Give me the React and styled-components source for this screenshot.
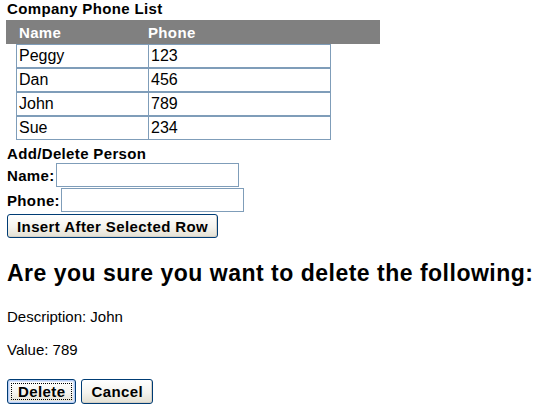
import React from "react";
import styled, { createGlobalStyle } from "styled-components";

const Global = createGlobalStyle`
  html, body { margin: 0; padding: 0; background: #fff; }
  body { font-family: "Liberation Sans", Arial, sans-serif; color: #000; }
`;

const Page = styled.div`
  display: flex;
  flex-direction: column;
  align-items: flex-start;
  padding: 0 0 0 7px;
`;

const Title = styled.div`
  font-size: 15px;
  font-weight: bold;
  letter-spacing: 0.35px;
  line-height: 17px;
  height: 20px;
  box-sizing: border-box;
`;

const HeaderBar = styled.div`
  display: grid;
  grid-template-columns: 129px 1fr;
  width: 374px;
  height: 24px;
  margin-left: -1px;
  background: #808080;
  color: #fff;
  font-size: 15px;
  font-weight: bold;
  letter-spacing: 0.35px;
  align-items: center;
  padding-left: 13px;
  box-sizing: border-box;
`;

const Rows = styled.div`
  display: flex;
  flex-direction: column;
  margin-left: 9px;
`;

const Row = styled.div`
  display: flex;
`;

const Cell = styled.div`
  width: ${(p) => p.$w}px;
  height: 24px;
  margin-left: ${(p) => (p.$joined ? -1 : 0)}px;
  box-sizing: border-box;
  border: 1px solid #7f9db9;
  padding: 0 2px;
  font-size: 16px;
  line-height: 22px;
  background: #fff;
`;

const SubTitle = styled.div`
  font-size: 15px;
  font-weight: bold;
  letter-spacing: 0.35px;
  line-height: 17px;
  margin-top: 5px;
`;

const FieldRow = styled.div`
  display: flex;
  align-items: center;
  margin-top: ${(p) => p.$mt}px;
`;

const Label = styled.span`
  font-size: 15px;
  font-weight: bold;
  letter-spacing: 0.35px;
`;

const TextBox = styled.input`
  width: 183px;
  height: 24px;
  box-sizing: border-box;
  border: 1px solid #7f9db9;
  margin: 0 0 0 1px;
  padding: 0 2px;
  font-family: inherit;
  font-size: 15px;
  outline: none;
`;

const Button = styled.button`
  font-family: "Liberation Sans", Arial, sans-serif;
  font-size: 15px;
  font-weight: bold;
  letter-spacing: 0.4px;
  color: #000;
  height: ${(p) => p.$h || 24}px;
  margin-top: ${(p) => p.$mt || 0}px;
  padding: 0 ${(p) => p.$px || 8}px;
  border: 1px solid #003c74;
  border-radius: 3px;
  background: linear-gradient(#ffffff 0%, #f4f3ee 55%, #e3e0d3 100%);
  box-shadow: inset -1px -1px 0 #d6d0c5;
  position: relative;
  cursor: pointer;
  ${(p) =>
    p.$focused &&
    `
    box-shadow: inset 0 0 0 1px #b6ccf4, inset 0 0 0 2px #d9e4f8;
    &::after {
      content: "";
      position: absolute;
      inset: 3px;
      border: 1px dotted #000;
    }
  `}
`;

const Heading = styled.h2`
  font-size: 23px;
  font-weight: bold;
  letter-spacing: 0.5px;
  margin: 22px 0 0 0;
  line-height: 26px;
`;

const Para = styled.p`
  font-size: 15px;
  margin: ${(p) => p.$mt}px 0 0 0;
  line-height: 17px;
`;

const Buttons = styled.div`
  display: flex;
  gap: 5px;
  margin-top: 21px;
`;

const people = [
  ["Peggy", "123"],
  ["Dan", "456"],
  ["John", "789"],
  ["Sue", "234"],
];

export default function App() {
  return (
    <>
      <Global />
      <Page>
        <Title>Company Phone List</Title>
        <HeaderBar>
          <span>Name</span>
          <span>Phone</span>
        </HeaderBar>
        <Rows>
          {people.map(([n, p]) => (
            <Row key={n}>
              <Cell $w={133}>{n}</Cell>
              <Cell $w={183} $joined>{p}</Cell>
            </Row>
          ))}
        </Rows>
        <SubTitle>Add/Delete Person</SubTitle>
        <FieldRow $mt={1}>
          <Label>Name:</Label>
          <TextBox />
        </FieldRow>
        <FieldRow $mt={1}>
          <Label>Phone:</Label>
          <TextBox />
        </FieldRow>
        <Button $mt={2} $px={9}>Insert After Selected Row</Button>
        <Heading>Are you sure you want to delete the following:</Heading>
        <Para $mt={22}>Description: John</Para>
        <Para $mt={16}>Value: 789</Para>
        <Buttons>
          <Button $focused $h={25} $px={10}>Delete</Button>
          <Button $h={25} $px={9}>Cancel</Button>
        </Buttons>
      </Page>
    </>
  );
}
